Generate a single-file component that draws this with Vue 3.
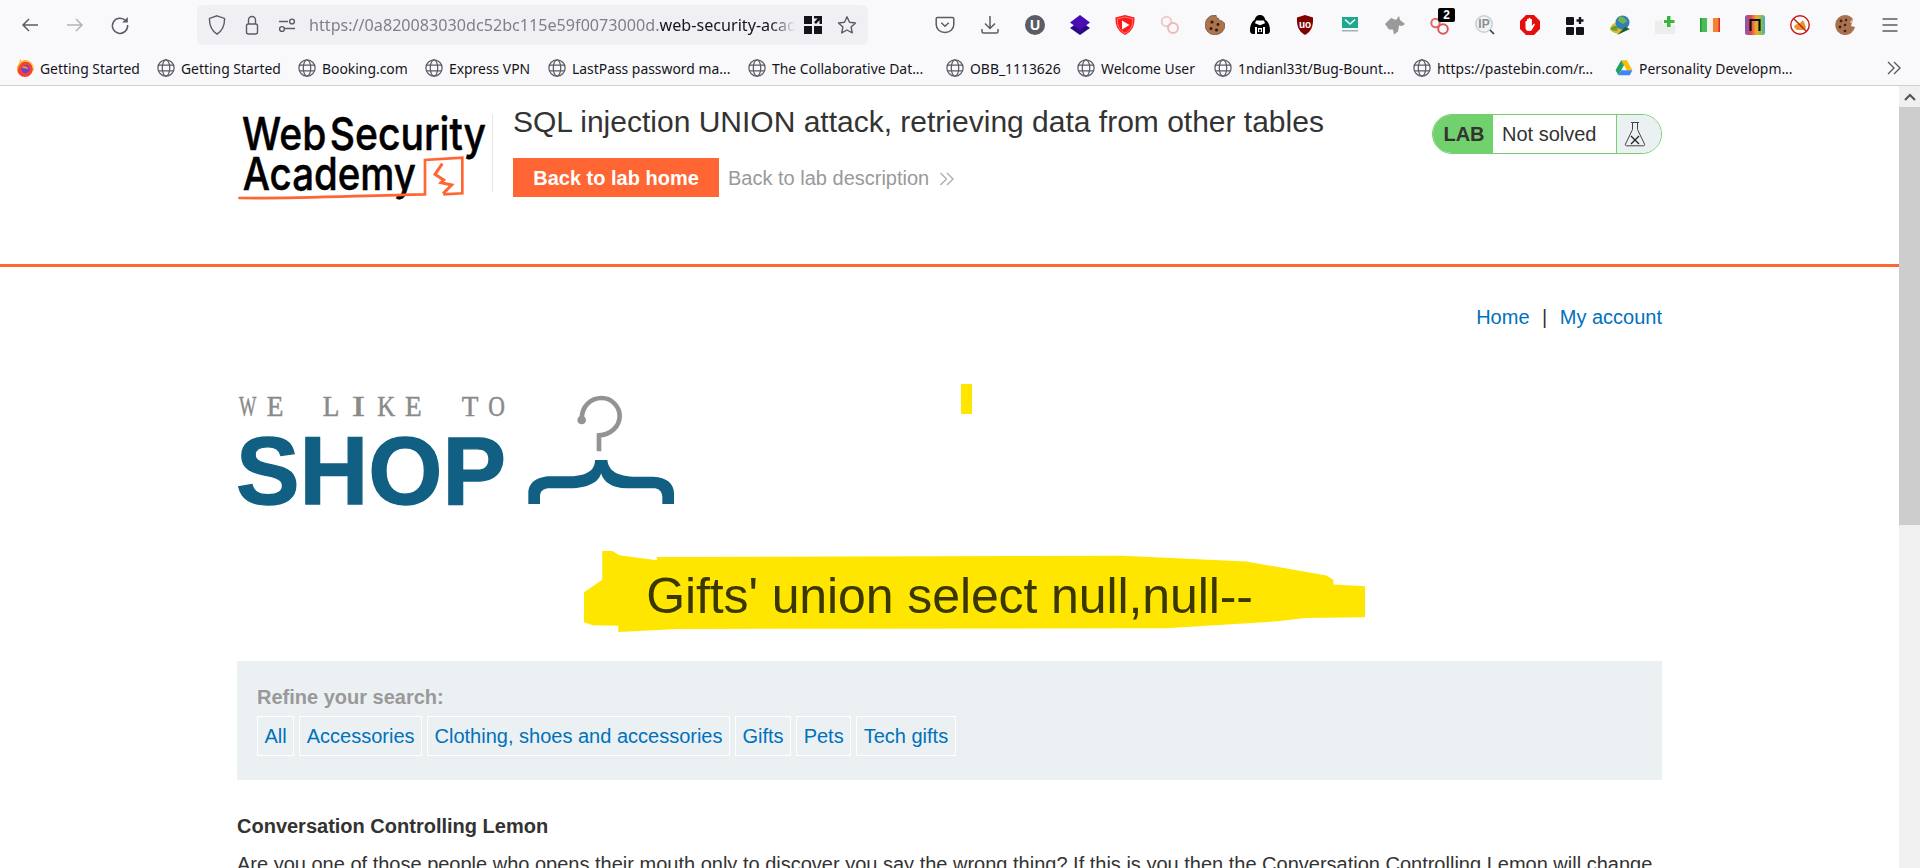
<script setup>
const bookmarks = [
  { label: 'Getting Started', w: 141, icon: 'firefox' },
  { label: 'Getting Started', w: 141, icon: 'globe' },
  { label: 'Booking.com', w: 127, icon: 'globe' },
  { label: 'Express VPN', w: 123, icon: 'globe' },
  { label: 'LastPass password ma...', w: 200, icon: 'globe' },
  { label: 'The Collaborative Dat...', w: 198, icon: 'globe' },
  { label: 'OBB_1113626', w: 131, icon: 'globe' },
  { label: 'Welcome User', w: 137, icon: 'globe' },
  { label: '1ndianl33t/Bug-Bount...', w: 199, icon: 'globe' },
  { label: 'https://pastebin.com/r...', w: 202, icon: 'globe' },
  { label: 'Personality Developm...', w: 180, icon: 'drive' }
]
const filters = ['All', 'Accessories', 'Clothing, shoes and accessories', 'Gifts', 'Pets', 'Tech gifts']
const tagline = [
  { c: 'W', x: 57, w: 52 }, { c: 'E', x: 140, w: 50 },
  { c: 'L', x: 308, w: 50 }, { c: 'I', x: 395, w: 40 }, { c: 'K', x: 472, w: 54 }, { c: 'E', x: 555, w: 50 },
  { c: 'T', x: 725, w: 50 }, { c: 'O', x: 805, w: 50 }
]
</script>

<template>
  <div class="screen">
    <header class="chrome">
      <div class="toolbar">
        <div class="nav">
          <span class="nav-btn">
            <svg viewBox="0 0 20 20" class="ic"><path d="M18 10H3M9 4l-6 6 6 6" fill="none" stroke="#5b5b66" stroke-width="1.5"/></svg>
          </span>
          <span class="nav-btn">
            <svg viewBox="0 0 20 20" class="ic"><path d="M2 10h15M11 4l6 6-6 6" fill="none" stroke="#b4b4ba" stroke-width="1.5"/></svg>
          </span>
          <span class="nav-btn">
            <svg viewBox="0 0 20 20" class="ic"><path d="M15.5 5.5A7.6 7.6 0 1 0 17.6 10" fill="none" stroke="#5b5b66" stroke-width="1.5"/><path d="M17.8 2v5.6h-5.6z" fill="#5b5b66"/></svg>
          </span>
        </div>
        <div class="urlbar">
          <svg viewBox="0 0 20 20" class="ic shield"><path d="M10 .8l7.500 2.600c.3 6.800-1.700 12-7.500 15.800C4.200 15.400 2.200 10.200 2.500 3.400z" fill="none" stroke="#5b5b66" stroke-width="1.4"/></svg>
          <svg viewBox="0 0 20 20" class="ic lock"><path d="M6.500 9V5a3.500 3.500 0 0 1 7 0v4" fill="none" stroke="#5b5b66" stroke-width="1.400"/><rect x="4.500" y="9" width="11" height="10" rx="2" fill="none" stroke="#5b5b66" stroke-width="1.400"/></svg>
          <svg viewBox="0 0 20 20" class="ic perm"><path d="M2 6.500h9M2 13.500h16" fill="none" stroke="#5b5b66" stroke-width="1.500"/><circle cx="15" cy="6.500" r="2.400" fill="none" stroke="#5b5b66" stroke-width="1.400"/><circle cx="5" cy="14" r="2.400" fill="#f0f0f4" stroke="#5b5b66" stroke-width="1.400"/></svg>
          <div class="url"><span class="url-dim">https://0a820083030dc52bc115e59f0073000d.</span>web-security-academy.net/filter?category=Gifts</div>
          <svg viewBox="0 0 20 20" class="ic qr"><path d="M1 1h8v8H1zM1 11h8v8H1zM11 11h8v8h-8z" fill="#15141a"/><path d="M11 1h8v8h-2.500V5.200L13 9 11 7.200 14.600 3.500H11z" fill="#15141a"/></svg>
          <svg viewBox="0 0 20 20" class="ic star"><path d="M10 1.800l2.500 5.500 6 .7-4.400 4 1.200 5.900L10 15l-5.300 2.900 1.200-5.900-4.400-4 6-.7z" fill="none" stroke="#5b5b66" stroke-width="1.400" stroke-linejoin="round"/></svg>
        </div>
        <div class="tools">
          <span class="tool"><svg viewBox="0 0 20 20" class="ic"><path d="M2.500 2.500h15c.8 0 1.300.5 1.300 1.300v5.700c0 4.700-3.900 8-8.800 8s-8.800-3.300-8.800-8V3.800c0-.8.500-1.300 1.300-1.300z" fill="none" stroke="#5b5b66" stroke-width="1.500"/><path d="M6.300 7.800L10 11.300l3.700-3.500" fill="none" stroke="#5b5b66" stroke-width="1.500"/></svg></span>
          <span class="tool"><svg viewBox="0 0 20 20" class="ic"><path d="M10 1v12M5 8.500l5 5 5-5M2 14v2.500c0 1 .5 1.500 1.500 1.500h13c1 0 1.500-.5 1.500-1.500V14" fill="none" stroke="#5b5b66" stroke-width="1.500"/></svg></span>
          <span class="tool"><svg viewBox="0 0 20 20" class="ic"><circle cx="10" cy="10" r="10" fill="#5b5b66"/><text x="10" y="14.800" text-anchor="middle" class="u-text">U</text></svg></span>
          <span class="tool"><svg viewBox="0 0 20 20" class="ic"><path d="M10 6l10 7-10 7-10-7z" fill="#2a0a80"/><path d="M10 0l10 7.500-10 7.500L0 7.500z" fill="#4a0cb5"/></svg></span>
          <span class="tool"><svg viewBox="0 0 20 20" class="ic"><path d="M10 0l9.500 2.500c.4 8-2.500 14-9.500 17.500C3 16.500.1 10.500.5 2.500z" fill="#ff1a1a"/><path d="M10 2l7.700 2c.3 6.500-2 11.500-7.700 14.300C4.300 15.500 2 10.500 2.300 4z" fill="none" stroke="#ffa0a0" stroke-width=".7"/><path d="M7 5.500l7.500 4.500L7 14.500z" fill="#fff"/></svg></span>
          <span class="tool"><svg viewBox="0 0 20 20" class="ic"><circle cx="6.500" cy="6.500" r="4.800" fill="none" stroke="#f2c9c9" stroke-width="2"/><circle cx="13" cy="13" r="5" fill="none" stroke="#eeb9b9" stroke-width="2"/></svg></span>
          <span class="tool"><svg viewBox="0 0 20 20" class="ic"><path d="M11 0c.1 2 1.200 3 2.500 3.200.2 1.600 1.800 2.800 3 2.300.8 1.200 3.500 1.500 3.500 4.500a10 10 0 1 1-9-10z" fill="#ad734c" stroke="#4a3a30" stroke-width=".5"/><circle cx="7" cy="7" r="1.600" fill="#2d1d14"/><circle cx="13" cy="9.500" r="1.400" fill="#2d1d14"/><circle cx="6" cy="13.500" r="1.500" fill="#2d1d14"/><circle cx="11.500" cy="15" r="1.600" fill="#2d1d14"/></svg></span>
          <span class="tool"><svg viewBox="0 0 20 20" class="ic"><path d="M10 0c3 0 5 2.200 5.200 4.800C18.500 6.500 20 11 20 15.500c0 2-1 3.500-3 3.500H3c-2 0-3-1.500-3-3.500C0 11 1.500 6.500 4.800 4.800 5 2.200 7 0 10 0z" fill="#000"/><path d="M6 5.500h8l1 2.800-5 2-5-2z" fill="#fff"/><path d="M5 12h2v7H5zM13 12h2v7h-2z" fill="#fff"/><rect x="8" y="13" width="4" height="4" fill="#fff"/><rect x="9" y="14.500" width="2" height="2" fill="#000"/></svg></span>
          <span class="tool"><svg viewBox="0 0 20 20" class="ic"><path d="M10 0l8 2.500c.5 8-1.500 14-8 17.500C3.500 16.500 1.500 10.500 2 2.500z" fill="#800000"/><text x="10" y="13" text-anchor="middle" class="ub-text">uo</text></svg></span>
          <span class="tool"><svg viewBox="0 0 20 20" class="ic"><rect x="2" y="2" width="16" height="11" fill="#1ea88f"/><path d="M5 4.500l5 4.500 5-4.500" fill="none" stroke="#fff" stroke-width="1.400"/><rect x="2" y="15" width="16" height="1.500" fill="#9fb5b0"/></svg></span>
          <span class="tool"><svg viewBox="0 0 20 20" class="ic"><path d="M0 9l6-6 5 2 3-4 1 4 5 4-3 2-3-.5-1 6-4 3-1-5-4 0z" fill="#9a9a9a"/></svg></span>
          <span class="tool badge-host"><svg viewBox="0 0 20 20" class="ic"><circle cx="5.500" cy="8" r="4.200" fill="none" stroke="#e06a6a" stroke-width="2"/><circle cx="13" cy="14" r="4.800" fill="none" stroke="#d95757" stroke-width="2"/></svg><span class="badge">2</span></span>
          <span class="tool"><svg viewBox="0 0 20 20" class="ic"><circle cx="9" cy="9" r="8.200" fill="#f2f3f5" stroke="#c9d0d6" stroke-width="1.600"/><text x="9" y="13.300" text-anchor="middle" class="ip-text">IP</text><path d="M15 15l4 4" stroke="#333" stroke-width="1.600"/></svg></span>
          <span class="tool"><svg viewBox="0 0 20 20" class="ic"><path d="M6 0h8l6 6v8l-6 6H6l-6-6V6z" fill="#e60d0d"/><path d="M5.500 10V6.500c0-1 1.500-1 1.500 0V9V4.500c0-1 1.600-1 1.600 0V9V3.500c0-1 1.700-1 1.700 0V9V4.500c0-1 1.600-1 1.600 0V11l1.500-2c.8-.8 1.900 0 1.300 1l-3 5c-.5.800-1 1-2 1H8.500C6.500 16 5.500 14.500 5.500 12.500z" fill="#fff"/></svg></span>
          <span class="tool"><svg viewBox="0 0 20 20" class="ic"><rect x="1" y="2" width="8" height="8" rx="1" fill="#15141a"/><rect x="1" y="12" width="8" height="8" rx="1" fill="#15141a"/><rect x="11" y="12" width="8" height="8" rx="1" fill="#15141a"/><path d="M15 2v7M11.500 5.500h7" stroke="#15141a" stroke-width="2.400"/></svg></span>
          <span class="tool"><svg viewBox="0 0 20 20" class="ic"><path d="M0 14c1-5 6-8 11-7l3 6-6 6c-3-1-7-2-8-5z" fill="#e8b82c"/><path d="M0 14c2-3 5-4 8-3l-1 5c-3 0-5-1-7-2z" fill="#5aa13a"/><circle cx="12.500" cy="7.500" r="7" fill="#2f7fb8"/><path d="M9 1.500c3-.5 7 1.500 8 5l-4 2.500-5-3z" fill="#72b050"/><path d="M7 20l13-6-5-2z" fill="#1f5f26"/></svg></span>
          <span class="tool"><svg viewBox="0 0 20 20" class="ic"><path d="M0 6l8-1v4h4l8 1v9H0z" fill="#eceeec"/><path d="M9 5h3V1h3.500v4h4v3h-4v4H12V8H9z" fill="#38b53a"/></svg></span>
          <span class="tool"><svg viewBox="0 0 20 20" class="ic"><rect x="0" y="3" width="7" height="14" fill="#199a3c"/><rect x="1.500" y="3" width="5.500" height="14" fill="#4cba55"/><rect x="7" y="3" width="6" height="14" fill="#f5f1ec"/><rect x="13" y="3" width="7" height="14" fill="#f58134"/><rect x="18.500" y="3" width="1.500" height="14" fill="#e9261c"/></svg></span>
          <span class="tool"><svg viewBox="0 0 20 20" class="ic"><rect width="20" height="20" rx="2.500" fill="url(#rainbow)"/><path d="M5.500 16V5h9v11" fill="none" stroke="#111" stroke-width="2.200"/><defs><linearGradient id="rainbow"><stop offset="0" stop-color="#7b5cc0"/><stop offset=".3" stop-color="#e0454f"/><stop offset=".55" stop-color="#f4a62e"/><stop offset=".8" stop-color="#8fc43c"/><stop offset="1" stop-color="#4ba5d8"/></linearGradient></defs></svg></span>
          <span class="tool"><svg viewBox="0 0 20 20" class="ic"><circle cx="10" cy="10" r="9.200" fill="#fff" stroke="#c81818" stroke-width="1.400"/><path d="M4 12c1-3 4-3 6-4l3-3 2 4 1 4-3 2H7z" fill="#e9952a"/><path d="M3.500 3.500l13 13" stroke="#c81818" stroke-width="1.400"/></svg></span>
          <span class="tool"><svg viewBox="0 0 20 20" class="ic"><path d="M10 0c3 0 6 1.500 8 4l-3 3 2 1-1 3 4 1a10 10 0 1 1-10-12z" fill="#a9714f"/><circle cx="6" cy="6" r="1.400" fill="#3d2318"/><circle cx="11" cy="5" r="1.200" fill="#3d2318"/><circle cx="5" cy="12" r="1.400" fill="#3d2318"/><circle cx="10" cy="10" r="1.300" fill="#3d2318"/><circle cx="10" cy="16" r="1.300" fill="#3d2318"/><circle cx="17" cy="6" r="1" fill="#c9a48c"/></svg></span>
          <span class="tool"><svg viewBox="0 0 20 20" class="ic"><path d="M2.500 4h15M2.500 10h15M2.500 16h15" stroke="#5b5b66" stroke-width="1.600"/></svg></span>
        </div>
      </div>
      <div class="bookmarks">
        <div v-for="(b, i) in bookmarks" :key="i" class="bm" :style="{ width: b.w + 'px' }">
          <svg v-if="b.icon === 'firefox'" viewBox="0 0 16 16" class="bm-ic"><circle cx="8" cy="9" r="7" fill="#f4442e"/><path d="M3.500 0c-.5 3-.5 4-2 6.500C.5 8 1 10 1.500 11 2 5 6 2 8 2c4 0 7 3 7 7 0 1 0 2-.5 3L16 9c0-3-2-7-6-8-2-.5-4 0-5 1z" fill="#ffbd2e"/><circle cx="8.500" cy="9" r="3.700" fill="#7340c8"/><path d="M5 7c2-1 5-1 6 2-2-1-4-.5-6-2z" fill="#ff9a2e"/></svg>
          <svg v-else-if="b.icon === 'drive'" viewBox="0 0 16 16" class="bm-ic"><path d="M5.500 1h5l5 9h-5z" fill="#fbbc04"/><path d="M5.500 1L.5 10l2.500 4.500L8 5.500z" fill="#1ea362"/><path d="M3 14.500h10.200l2.300-4.500H5.500z" fill="#4285f4"/></svg>
          <svg v-else viewBox="0 0 16 16" class="bm-ic"><circle cx="8" cy="8" r="7.200" fill="none" stroke="#5b5b66" stroke-width="1.100"/><ellipse cx="8" cy="8" rx="3.300" ry="7.200" fill="none" stroke="#5b5b66" stroke-width="1.100"/><path d="M1 5.500h14M1 10.500h14" stroke="#5b5b66" stroke-width="1.100"/></svg>
          <span class="bm-label">{{ b.label }}</span>
        </div>
        <svg viewBox="0 0 16 16" class="bm-more"><path d="M2 2l6 6-6 6M8 2l6 6-6 6" fill="none" stroke="#5b5b66" stroke-width="1.400"/></svg>
      </div>
    </header>

    <div class="viewport">
      <main class="page">
        <section class="academy">
          <div class="academy-inner">
            <svg class="wsa-logo" viewBox="21 27 765 258" role="img" aria-label="Web Security Academy">
              <text x="36" y="134" class="wsa-text" textLength="732" lengthAdjust="spacingAndGlyphs">Web Security</text>
              <text x="38" y="254" class="wsa-text" textLength="520" lengthAdjust="spacingAndGlyphs">Academy</text>
              <path d="M25 279c180 3 370-8 560-11V165l112-7v107l-57 3" fill="none" stroke="#ff6633" stroke-width="8"/>
              <path d="M637 176l-22 32 26 17-8 8 32 7-26 26" fill="none" stroke="#ff6633" stroke-width="9"/>
            </svg>
            <div class="divider"></div>
            <div class="lab-title">
              <h2>SQL injection UNION attack, retrieving data from other tables</h2>
              <div class="lab-links">
                <a class="home-btn">Back to lab home</a>
                <a class="desc-link">Back to lab description
                  <svg viewBox="0 0 16 14" class="desc-chev"><path d="M1.500 1l6 6-6 6M8 1l6 6-6 6" fill="none" stroke="#aaa" stroke-width="1.300"/></svg>
                </a>
              </div>
            </div>
            <div class="lab-status">
              <span class="lab-tag">LAB</span>
              <span class="lab-state">Not solved</span>
              <span class="lab-flask">
                <svg viewBox="0 0 22 26" class="flask"><path d="M7 1.500h8M8.500 1.500v7L1.500 23c-.5 1 0 1.800 1 1.800h17c1 0 1.500-.8 1-1.800L13.500 8.500v-7" fill="none" stroke="#444" stroke-width="1"/><path d="M7 15l8 8M15 15l-8 8" stroke="#222" stroke-width="1.300"/></svg>
              </span>
            </div>
          </div>
        </section>

        <div class="container">
          <nav class="top-links"><a>Home</a><span class="sep">|</span><a>My account</a></nav>

          <svg class="shop-logo" viewBox="51 0 1389 420" role="img" aria-label="We like to shop">
            <text v-for="(l, i) in tagline" :key="i" :x="l.x" y="107" class="shop-small" :textLength="l.w" lengthAdjust="spacingAndGlyphs">{{ l.c }}</text>
            <text x="48" y="372" class="shop-big" textLength="810" lengthAdjust="spacingAndGlyphs">SHOP</text>
            <path d="M1085 120a3 3 0 0 1 0-2c0-40 28-64 60-64 32 0 54 28 54 54 0 34-30 56-62 58v48" fill="none" stroke="#939393" stroke-width="14"/>
            <circle cx="1085" cy="120" r="13" fill="#939393"/>
            <path d="M925 372V340C925 305 955 290 990 289H1050C1110 287 1125 265 1125 240H1162C1165 265 1180 287 1240 290H1300C1340 292 1362 310 1362 340V372H1327V350C1325 332 1315 325 1300 325H1220C1175 325 1150 305 1143 280C1138 305 1105 325 1050 325H990C972 325 960 332 960 350V372Z" fill="#115f83"/>
          </svg>

          <div class="search-title">
            <svg class="marker" viewBox="44 62 1458 242" preserveAspectRatio="none" aria-hidden="true"><path d="M78 62H97L110 75 180 90V80L1050 76 1280 93 1430 135 1443 148V162L1502 167V260L1390 262 1340 272 1130 293 220 295 108 304V285L60 284 44 275V185L78 148Z" fill="#ffe600"/></svg>
            <h1>Gifts' union select null,null--</h1>
          </div>

          <section class="filters">
            <div class="filters-label">Refine your search:</div>
            <div class="filters-row">
              <a v-for="f in filters" :key="f" class="filter">{{ f }}</a>
            </div>
          </section>

          <h3 class="product-name">Conversation Controlling Lemon</h3>
          <p class="product-text">Are you one of those people who opens their mouth only to discover you say the wrong thing? If this is you then the Conversation Controlling Lemon will change your life.</p>
        </div>
        <div class="pen-mark"></div>
      </main>
      <aside class="scrollbar">
        <div class="sb-btn"><svg viewBox="0 0 12 8" class="sb-arrow"><path d="M1 7l5-5 5 5" fill="none" stroke="#505050" stroke-width="2"/></svg></div>
        <div class="sb-thumb"></div>
      </aside>
    </div>
  </div>
</template>

<style scoped>
.screen { width: 1920px; height: 868px; overflow: hidden; display: flex; flex-direction: column; background: #fff; font-family: "Liberation Sans", Arial, sans-serif; color: #333332; }
.chrome { height: 86px; flex: none; background: #f9f9fb; border-bottom: 1px solid #cfcfd8; box-sizing: border-box; font-family: "Noto Sans", sans-serif; color: #15141a; }
.toolbar { display: flex; align-items: center; height: 40px; padding-top: 5px; }
.ic { width: 20px; height: 20px; display: block; flex: none; }
.nav { display: flex; width: 197px; padding-left: 7px; box-sizing: border-box; }
.nav-btn { width: 45px; display: flex; justify-content: center; }
.urlbar { width: 671px; height: 40px; background: #f0f0f4; border-radius: 6px; display: flex; align-items: center; box-sizing: border-box; padding-left: 10px; flex: none; }
.urlbar .lock { margin-left: 15px; }
.urlbar .perm { margin-left: 15px; }
.url { width: 486px; margin-left: 12px; white-space: nowrap; overflow: hidden; font-size: 16.150px; color: #15141a; -webkit-mask-image: linear-gradient(to right, #000 95%, transparent); mask-image: linear-gradient(to right, #000 95%, transparent); }
.url-dim { color: #7f7f87; }
.urlbar .qr { margin-left: 8px; }
.urlbar .star { margin-left: 14px; }
.tools { display: flex; margin-left: 54px; }
.tool { width: 45px; display: flex; justify-content: center; position: relative; }
.u-text { font: bold 14px "Liberation Sans", sans-serif; fill: #fff; }
.ub-text { font: bold 10px "Liberation Sans", sans-serif; fill: #fff; }
.ip-text { font: bold 12px "Liberation Sans", sans-serif; fill: #8a8f94; }
.badge { position: absolute; left: 21px; top: -7px; width: 17px; height: 14px; background: #000; color: #fff; border-radius: 2px; font: bold 12px/14px "Liberation Sans", sans-serif; text-align: center; }
.bookmarks { display: flex; align-items: center; height: 32px; margin-top: 7px; padding-left: 17px; position: relative; }
.bm { display: flex; align-items: center; gap: 6px; flex: none; box-sizing: border-box; }
.bm-ic { width: 18px; height: 18px; flex: none; margin-left: -1px; }
.bm-label { font-size: 13.900px; white-space: nowrap; color: #15141a; }
.bm-more { width: 16px; height: 16px; margin-left: auto; margin-right: 18px; }
.viewport { flex: 1; display: flex; min-height: 0; }
.page { flex: 1; min-width: 0; position: relative; font-size: 20px; line-height: 23px; overflow: hidden; }
.academy { height: 181px; border-bottom: 3px solid #ff6633; box-sizing: border-box; }
.academy-inner { width: 1425px; margin: 0 auto; display: flex; align-items: flex-start; padding-top: 28px; }
.wsa-logo { width: 255px; height: 86px; flex: none; }
.wsa-text { font-family: Inter, sans-serif; font-weight: 500; font-size: 136px; word-spacing: -24px; fill: #000; stroke: #000; stroke-width: 1.500px; }
.divider { width: 1px; height: 78px; background: #e4e4e4; flex: none; }
.lab-title { margin-left: 20px; flex: 1; min-width: 0; }
.lab-title h2 { margin: 0; font-size: 30px; line-height: 32px; font-weight: 400; color: #333332; margin-top: -8px; white-space: nowrap; }
.lab-links { display: flex; align-items: center; margin-top: 20px; }
.home-btn { width: 206px; height: 39px; background: #ff6633; color: #fff; font-weight: 700; display: flex; align-items: center; justify-content: center; flex: none; padding-top: 2px; box-sizing: border-box; }
.desc-link { margin-left: 9px; color: #999; display: flex; align-items: center; padding-top: 2px; }
.desc-chev { width: 16px; height: 14px; margin-left: 10px; }
.lab-status { display: flex; width: 230px; height: 40px; flex: none; box-sizing: border-box; border: 1px solid #70d16d; border-radius: 20px; overflow: hidden; }
.lab-tag { width: 60px; background: #70d16d; font-weight: 700; display: flex; align-items: center; justify-content: center; flex: none; padding-left: 2px; box-sizing: border-box; }
.lab-state { width: 124px; display: flex; align-items: center; padding-left: 9px; box-sizing: border-box; flex: none; border-right: 1px solid #70d16d; }
.lab-flask { flex: 1; background: #ebf0f2; display: flex; align-items: center; padding-left: 7px; }
.flask { width: 22px; height: 26px; }
.container { width: 1425px; margin: 0 auto; }
.top-links { display: flex; justify-content: flex-end; padding-top: 39px; color: #0071bc; }
.sep { color: #333332; margin: 0 12.500px; }
.shop-logo { display: block; width: 463px; height: 140px; margin-top: 51px; }
.shop-small { font-family: "Liberation Serif", serif; font-size: 88px; fill: #8a8a8a; stroke: #8a8a8a; stroke-width: 1.500px; }
.shop-big { font-family: "Liberation Sans", sans-serif; font-weight: 700; font-size: 291px; fill: #115f83; stroke: #115f83; stroke-width: 4px; }
.search-title { position: relative; margin-top: 46px; height: 60px; }
.marker { position: absolute; left: 347px; top: -15px; width: 781px; height: 81px; }
.search-title h1 { position: relative; margin: 0; text-align: center; font-size: 50px; letter-spacing: -.1px; line-height: 60px; font-weight: 400; color: #3b3700; }
.filters { margin-top: 35px; height: 119px; box-sizing: border-box; background: #ebf0f2; padding: 25px 20px 0; }
.filters-label { font-weight: 700; color: #999; }
.filters-row { display: flex; gap: 5px; margin-top: 7px; }
.filter { height: 40px; box-sizing: border-box; border: 1px solid #fff; padding: 0 6.500px; display: flex; align-items: center; color: #0071bc; }
.product-name { margin: 35px 0 0; font-size: 20px; line-height: 23px; font-weight: 700; }
.product-text { margin: 15px 0 0; }
.pen-mark { position: absolute; left: 961px; top: 298px; width: 11px; height: 30px; background: #ffe600; }
.scrollbar { width: 21px; flex: none; background: #f0f0f0; }
.sb-btn { height: 21px; display: flex; align-items: center; justify-content: center; }
.sb-arrow { width: 12px; height: 8px; }
.sb-thumb { height: 418px; background: #cdcdcd; }
</style>

<style>
html, body { margin: 0; overflow: hidden; background: #fff; }
</style>
